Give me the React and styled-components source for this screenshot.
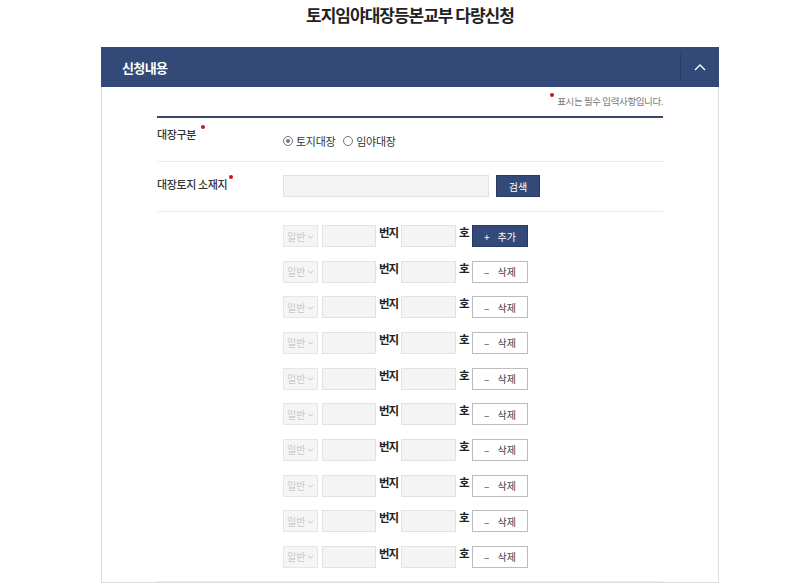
import styled, { createGlobalStyle } from "styled-components";

const GlobalStyle = createGlobalStyle`
  html, body {
    margin: 0;
    padding: 0;
    background: #fff;
    font-family: "Noto Sans CJK KR", "Noto Sans", sans-serif;
    color: #333;
  }
`;

const Page = styled.div`
  width: 618px;
  margin-left: 101px;
`;

const Title = styled.h1`
  margin: 0;
  height: 47px;
  padding-top: 2px;
  box-sizing: border-box;
  text-align: center;
  font-size: 17px;
  line-height: 26px;
  font-weight: 700;
  color: #222;
  letter-spacing: -1px;
`;

const Panel = styled.section`
  border: 1px solid #dcdcdc;
  border-top: none;
`;

const PanelHeader = styled.div`
  height: 40px;
  background: #334a79;
  display: flex;
  align-items: center;
  justify-content: space-between;
  margin: 0 -1px;
`;

const PanelTitle = styled.h2`
  margin: 0 0 0 21px;
  font-size: 13px;
  font-weight: 700;
  color: #fff;
  letter-spacing: -0.6px;
`;

const Toggle = styled.button`
  width: 38px;
  height: 28px;
  border: none;
  border-left: 1px solid #2a3e66;
  background: transparent;
  display: flex;
  align-items: center;
  justify-content: center;
  padding: 0;
  margin-right: 1px;
`;

const Body = styled.div`
  padding: 6px 55px 0;
`;

const Note = styled.p`
  margin: 0;
  text-align: right;
  font-size: 9.5px;
  line-height: 16px;
  letter-spacing: -0.4px;
  color: #777;
  padding-bottom: 7px;
  border-bottom: 2px solid #3b4863;
`;

const Dot = styled.span`
  display: inline-block;
  width: 4px;
  height: 4px;
  border-radius: 50%;
  background: #d0121b;
  vertical-align: top;
  margin: ${(p) => p.$m || "0 3px 0 0"};
`;

const Row = styled.div`
  display: flex;
  border-bottom: 1px solid #ebebeb;
  padding: ${(p) => p.$pad};
`;

const Label = styled.div`
  width: 126px;
  flex-shrink: 0;
  font-size: 11px;
  font-weight: 500;
  letter-spacing: -0.4px;
  color: #333;
  line-height: 18px;
  padding-top: ${(p) => p.$top || "0"};
`;

const Field = styled.div`
  display: flex;
  align-items: center;
  gap: ${(p) => p.$gap || "7px"};
  padding-top: ${(p) => p.$top || "0"};
`;

const RadioLabel = styled.label`
  display: flex;
  align-items: center;
  gap: 3px;
  font-size: 11px;
  letter-spacing: -0.3px;
  color: #333;
`;

const RadioMark = styled.span`
  width: 8px;
  height: 8px;
  border: 1px solid #777;
  border-radius: 50%;
  display: flex;
  align-items: center;
  justify-content: center;
  &::after {
    content: "";
    width: 4px;
    height: 4px;
    border-radius: 50%;
    background: ${(p) => (p.$on ? "#777" : "transparent")};
  }
`;

const Input = styled.div`
  width: ${(p) => p.$w}px;
  height: 22px;
  box-sizing: border-box;
  background: #f4f4f4;
  border: 1px solid #e2e2e2;
  flex-shrink: 0;
`;

const NavyButton = styled.button`
  height: 22px;
  width: ${(p) => p.$w}px;
  box-sizing: border-box;
  background: #334a79;
  border: 1px solid #263a62;
  color: #fff;
  font-family: inherit;
  font-size: 10px;
  padding: 0;
  display: flex;
  align-items: center;
  justify-content: center;
  gap: 8px;
  flex-shrink: 0;
`;

const LineButton = styled(NavyButton)`
  background: #fff;
  border: 1px solid #bcbcbc;
  color: #444;
`;

const Parcels = styled.div`
  display: flex;
  flex-direction: column;
  gap: 13.67px;
`;

const Parcel = styled.div`
  display: flex;
  align-items: center;
  height: 22px;
`;

const Select = styled.div`
  width: 35px;
  height: 22px;
  box-sizing: border-box;
  background: #f5f5f5;
  border: 1px solid #e6e6e6;
  display: flex;
  align-items: center;
  padding-left: 3px;
  gap: 2px;
  font-size: 10px;
  white-space: nowrap;
  color: #c8c8c8;
  margin-right: 4px;
  flex-shrink: 0;
`;

const Unit = styled.span`
  width: ${(p) => p.$w}px;
  flex-shrink: 0;
  box-sizing: border-box;
  padding-left: 3px;
  font-size: 11.5px;
  font-weight: 700;
  letter-spacing: -1px;
  color: #222;
  line-height: 22px;
  align-self: flex-start;
  margin-top: -4px;
  white-space: nowrap;
`;

const Chevron = ({ size = 5, color = "#c0c0c0" }) => (
  <svg width={size + 2} height={size} viewBox="0 0 8 6">
    <path d="M1 2 L4 5 L7 2" fill="none" stroke={color} strokeWidth="1.2" />
  </svg>
);

const parcels = Array.from({ length: 10 }, (_, i) => i);

export default function App() {
  return (
    <>
      <GlobalStyle />
      <Page>
        <Title>토지임야대장등본교부 다량신청</Title>
        <Panel>
          <PanelHeader>
            <PanelTitle>신청내용</PanelTitle>
            <Toggle aria-label="접기">
              <svg width="12" height="8" viewBox="0 0 12 8">
                <path d="M1 7 L6 2 L11 7" fill="none" stroke="#fff" strokeWidth="1.3" />
              </svg>
            </Toggle>
          </PanelHeader>
          <Body>
            <Note>
              <Dot $m="0 3px 0 0" />
              표시는 필수 입력사항입니다.
            </Note>
            <Row $pad="7px 0 12px">
              <Label>
                대장구분
                <Dot $m="0 0 0 5px" />
              </Label>
              <Field $top="8px" $gap="8px">
                <RadioLabel>
                  <RadioMark $on />
                  토지대장
                </RadioLabel>
                <RadioLabel>
                  <RadioMark />
                  임야대장
                </RadioLabel>
              </Field>
            </Row>
            <Row $pad="13px 0 14px">
              <Label>
                대장토지 소재지
                <Dot $m="0 0 0 2px" />
              </Label>
              <Field $gap="7px">
                <Input $w={206} />
                <NavyButton $w={44}>검색</NavyButton>
              </Field>
            </Row>
            <Row $pad="13px 0 13px">
              <Label />
              <Parcels>
                {parcels.map((i) => (
                  <Parcel key={i}>
                    <Select>
                      일반 <Chevron />
                    </Select>
                    <Input $w={54} />
                    <Unit $w={25}>번지</Unit>
                    <Input $w={55} />
                    <Unit $w={16}>호</Unit>
                    {i === 0 ? (
                      <NavyButton $w={56}>
                        <span>+</span>
                        <span>추가</span>
                      </NavyButton>
                    ) : (
                      <LineButton $w={56}>
                        <span>–</span>
                        <span>삭제</span>
                      </LineButton>
                    )}
                  </Parcel>
                ))}
              </Parcels>
            </Row>
          </Body>
        </Panel>
      </Page>
    </>
  );
}
